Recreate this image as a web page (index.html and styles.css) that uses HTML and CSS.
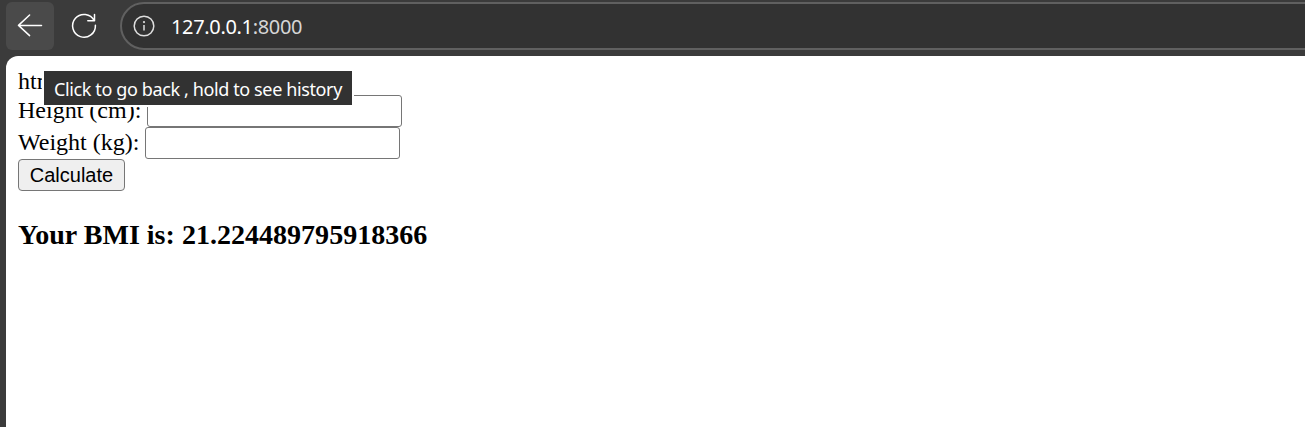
FILE: index.html
```html
<!DOCTYPE html>
<html lang="en">
<head>
<meta charset="utf-8">
<title>127.0.0.1:8000</title>
<link rel="stylesheet" href="styles.css">
</head>
<body>
<div class="browser">
  <header class="toolbar">
    <button class="nav nav-active" aria-label="Back">
      <svg width="48" height="48" viewBox="0 0 48 48"><path d="M35.5 23.4H12.5M23.6 13L12.5 23.4l11.1 10.2"/></svg>
    </button>
    <button class="nav" aria-label="Reload">
      <svg width="48" height="48" viewBox="0 0 48 48"><path d="M34.2 18.7A11.4 11.4 0 1 0 35.4 23.2M34.5 12.6v6.2h-6.7"/></svg>
    </button>
    <div class="address">
      <svg class="info" width="22" height="22" viewBox="0 0 22 22"><circle cx="11" cy="11" r="9.8"/><path d="M11 10v5.5"/><circle class="dot" cx="11" cy="7.1" r="1.1"/></svg>
      <span class="url">127.0.0.1<span class="port">:8000</span></span>
    </div>
  </header>
  <main class="page">
    <div class="intro">html</div>
    <form>
      <div class="row"><label for="height">Height (cm):</label><input id="height" type="text"></div>
      <div class="row"><label for="weight">Weight (kg):</label><input id="weight" type="text"></div>
      <button class="calculate" type="button">Calculate</button>
    </form>
    <h3 class="result">Your BMI is: 21.224489795918366</h3>
  </main>
  <div class="tooltip" role="tooltip">Click to go back , hold to see history</div>
</div>
</body>
</html>
```
FILE: styles.css
```css
* { box-sizing: border-box; }
body { margin: 0; background: #3b3b3b; overflow: hidden; }
.browser { position: relative; height: 427px; display: flex; flex-direction: column; }
.toolbar { height: 56px; flex: none; display: flex; padding: 2px 0 0 6px; }
.nav { width: 48px; height: 48px; padding: 0; border: 0; border-radius: 6px; background: transparent; margin-right: 6px; }
.nav-active { background: #4a4a4a; }
.nav svg { display: block; fill: none; stroke: #fff; stroke-width: 1.5; stroke-linecap: round; stroke-linejoin: round; }
.address { flex: 1; height: 48px; margin: 0 -30px 0 6px; border: 2px solid #606060; border-radius: 24px; background: #323232; display: flex; align-items: center; padding-left: 11px; }
.info { fill: none; stroke: #dedede; stroke-width: 1.5; }
.info .dot { fill: #dedede; stroke: none; }
.url { margin-left: 16px; padding-top: 1px; font: 20px/28px "Noto Sans", "Open Sans", sans-serif; color: #fff; letter-spacing: -0.34px; white-space: nowrap; }
.port { color: #d6d6d6; }
.page { flex: 1; margin-left: 6px; padding: 12px; background: #fff; border-top-left-radius: 12px; font: 24px/27px "Liberation Serif", "Times New Roman", serif; color: #000; }
.intro { height: 27px; }
.row { height: 32px; display: flex; line-height: 30px; }
.row input { width: 255px; height: 32px; margin: 0 0 0 6px; padding: 0 3px; border: 1px solid #767676; border-radius: 3px; background: #fff; font: 20px "Liberation Sans", Arial, sans-serif; }
.calculate { display: block; width: 107px; height: 32px; padding: 0; border: 1px solid #767676; border-radius: 4px; background: #efefef; color: #000; font: 20px/28px "Liberation Sans", Arial, sans-serif; }
.result { margin: 28px 0; font-size: 28.05px; line-height: 32px; }
.tooltip { position: absolute; left: 42px; top: 69px; width: 312px; height: 38px; border: 2px solid #fff; background: #323232; color: #fff; padding-left: 10px; font: 18px/36px "Noto Sans", "Open Sans", sans-serif; white-space: nowrap; letter-spacing: -0.38px; }
```
